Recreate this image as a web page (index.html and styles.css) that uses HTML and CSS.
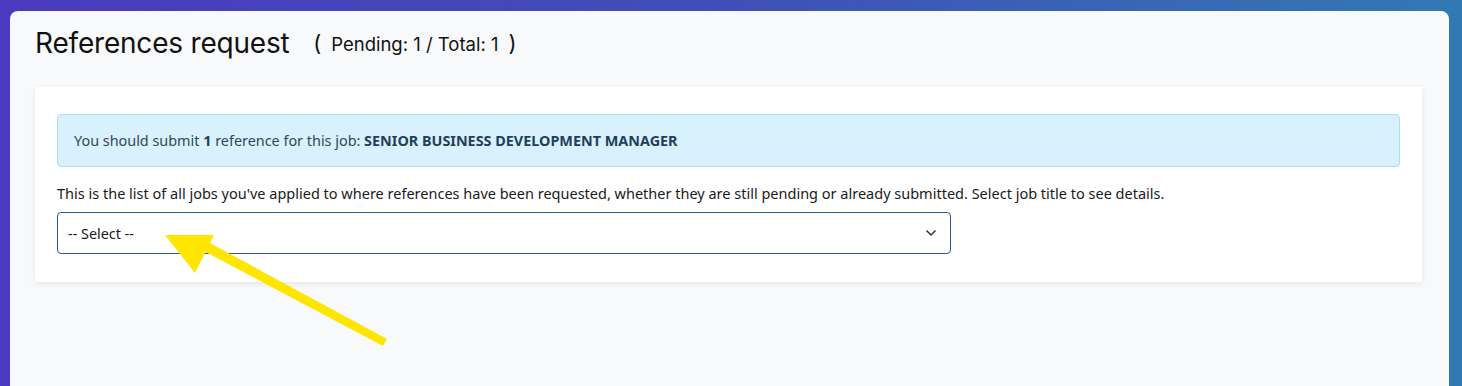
FILE: index.html
```html
<!DOCTYPE html>
<html>
<head>
<meta charset="utf-8">
<link rel="stylesheet" href="styles.css">
</head>
<body>
<div class="panel">
  <h1 class="title">References request <span class="counts"><span class="paren">(</span>Pending: 1 / Total: 1<span class="paren">)</span></span></h1>
  <div class="card">
    <div class="alert">You should submit <b>1</b> reference for this job: <b>SENIOR BUSINESS DEVELOPMENT MANAGER</b></div>
    <p class="hint">This is the list of all jobs you've applied to where references have been requested, whether they are still pending or already submitted. Select job title to see details.</p>
    <div class="select">
      <span>-- Select --</span>
      <svg class="chev" width="12" height="8" viewBox="0 0 12 8"><path d="M1.5 1.5 L6 6 L10.5 1.5" fill="none" stroke="#333" stroke-width="1.5"/></svg>
    </div>
  </div>
</div>
<svg class="arrow" width="1462" height="386" viewBox="0 0 1462 386">
  <polygon points="165,235 214,235 195,273" fill="#ffe600"/>
  <polygon points="198,248 208,242 387,339 383,346" fill="#ffe600"/>
</svg>
</body>
</html>
```
FILE: styles.css
```css
html, body { margin: 0; padding: 0; }
body {
  width: 1462px;
  height: 386px;
  overflow: hidden;
  background: linear-gradient(to right, #4b3abf 0%, #3f4fb9 50%, #3279b3 100%);
  font-family: "Noto Sans", "Liberation Sans", sans-serif;
  position: relative;
}
.panel {
  margin: 11px 13px 0 10px;
  height: 375px;
  background: #f8f9fb;
  border-radius: 8px 8px 0 0;
  padding: 17px 27px 0 25px;
  box-sizing: border-box;
}
.title {
  margin: 0;
  font-family: "Inter", "Noto Sans", sans-serif;
  font-weight: 400;
  font-size: 28px;
  line-height: 30px;
  color: #111;
  letter-spacing: -0.2px;
}
.counts {
  font-size: 18.5px;
  margin-left: 6px;
  vertical-align: 2px;
  letter-spacing: 0;
}
.paren {
  font-size: 22px;
  margin: 0 10px;
}
.card {
  margin-top: 28px;
  background: #fff;
  box-shadow: 0 2px 6px rgba(0,0,0,0.08);
  padding: 27px 22px 28px 22px;
}
.alert {
  background: #d9f1fc;
  border: 1px solid #a8def6;
  border-radius: 4px;
  height: 53px;
  box-sizing: border-box;
  padding: 0 16px;
  display: flex;
  align-items: center;
  font-size: 14.4px;
  color: #30475e;
  white-space: pre;
}
.alert b { font-weight: 700; color: #1f3f5c; }
.hint {
  margin: 17px 0 9px;
  font-size: 14.5px;
  line-height: 19px;
  color: #1a1a1a;
}
.select {
  width: 894px;
  height: 42px;
  box-sizing: border-box;
  border: 1px solid #2b5c97;
  border-radius: 4px;
  display: flex;
  align-items: center;
  justify-content: space-between;
  padding: 0 13px 0 10px;
  font-size: 14.4px;
  color: #1a1a1a;
}
.arrow {
  position: absolute;
  left: 0;
  top: 0;
  pointer-events: none;
}
```
